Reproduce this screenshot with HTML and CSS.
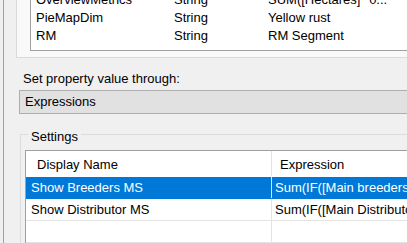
FILE: index.html
```html
<!DOCTYPE html>
<html>
<head>
<meta charset="utf-8">
<link rel="stylesheet" href="styles.css">
</head>
<body>
<div class="window">
  <div class="tabpage">
    <div class="list">
      <div class="list-inner">
        <div class="lrow"><span class="c1">OverviewMetrics</span><span class="c2">String</span><span class="c3">SUM([Hectares] *0...</span></div>
        <div class="lrow"><span class="c1">PieMapDim</span><span class="c2">String</span><span class="c3">Yellow rust</span></div>
        <div class="lrow"><span class="c1">RM</span><span class="c2">String</span><span class="c3">RM Segment</span></div>
      </div>
    </div>
  </div>
  <div class="label">Set property value through:</div>
  <div class="combo">Expressions</div>
  <div class="group">
    <div class="group-title">Settings</div>
    <div class="grid">
      <div class="grow head"><div class="g1">Display Name</div><div class="g2">Expression</div></div>
      <div class="grow sel"><div class="g1">Show Breeders MS</div><div class="g2">Sum(IF([Main breeders] = 'Yes', 1, 0))</div></div>
      <div class="grow"><div class="g1">Show Distributor MS</div><div class="g2">Sum(IF([Main Distributor] = 'Yes', 1, 0))</div></div>
      <div class="grow"><div class="g1"></div><div class="g2"></div></div>
    </div>
  </div>
</div>
</body>
</html>
```
FILE: styles.css
```css
html, body {
  margin: 0;
  padding: 0;
  background: #f0f0f0;
  width: 407px;
  height: 243px;
  overflow: hidden;
}
body {
  font-family: "Liberation Sans", Arial, sans-serif;
  font-size: 13px;
  color: #000;
}
.window {
  margin-left: 3px;
  border-left: 1px solid #a0a0a0;
  height: 243px;
  overflow: hidden;
}
.tabpage {
  margin-left: 12px;
  width: 600px;
  height: 57px;
  border-left: 1px solid #dadada;
  border-bottom: 1px solid #dadada;
  background: #f9f9f9;
  box-sizing: content-box;
  overflow: hidden;
}
.list {
  margin-left: 13px;
  width: 600px;
  height: 50px;
  background: #fff;
  border-left: 1px solid #a0a0a0;
  border-bottom: 1px solid #a0a0a0;
  overflow: hidden;
}
.list-inner {
  margin-top: -9px;
}
.lrow {
  display: flex;
  height: 18px;
  line-height: 18px;
  white-space: nowrap;
}
.c1 { width: 138px; padding-left: 5px; }
.c2 { width: 94px; }
.c3 { flex: 1; }
.label {
  margin: 13px 0 0 19px;
  height: 16px;
  line-height: 16px;
}
.combo {
  margin: 3px 0 0 15px;
  height: 22px;
  line-height: 22px;
  padding-left: 5px;
  width: 600px;
  background: #e1e1e1;
  border: 1px solid #adadad;
  white-space: nowrap;
}
.group {
  margin: 20px 0 0 16px;
  border-left: 1px solid #dcdcdc;
  border-top: 1px solid #dcdcdc;
  width: 600px;
  height: 200px;
  position: relative;
}
.group-title {
  position: absolute;
  left: 7px;
  top: -6px;
  padding: 0 3px;
  background: #f0f0f0;
  line-height: 16px;
}
.grid {
  margin: 15px 0 0 4px;
  border-left: 1px solid #a0a0a0;
  border-top: 1px solid #a0a0a0;
  background: #fff;
  width: 600px;
}
.grow {
  display: flex;
  height: 21px;
  line-height: 21px;
  border-bottom: 1px solid #e3e3e3;
  white-space: nowrap;
}
.g1 {
  width: 240px;
  padding-left: 5px;
  border-right: 1px solid #e3e3e3;
}
.g2 {
  flex: 1;
  padding-left: 3px;
}
.head { height: 25px; line-height: 27px; border-bottom-color: #fff; }
.head .g1 { padding-left: 11px; width: 234px; }
.head .g2 { padding-left: 8px; }
.sel { background: #0078d7; color: #fff; border-bottom-color: #0078d7; }
.sel .g1 { border-right-color: #e3e3e3; }
```
